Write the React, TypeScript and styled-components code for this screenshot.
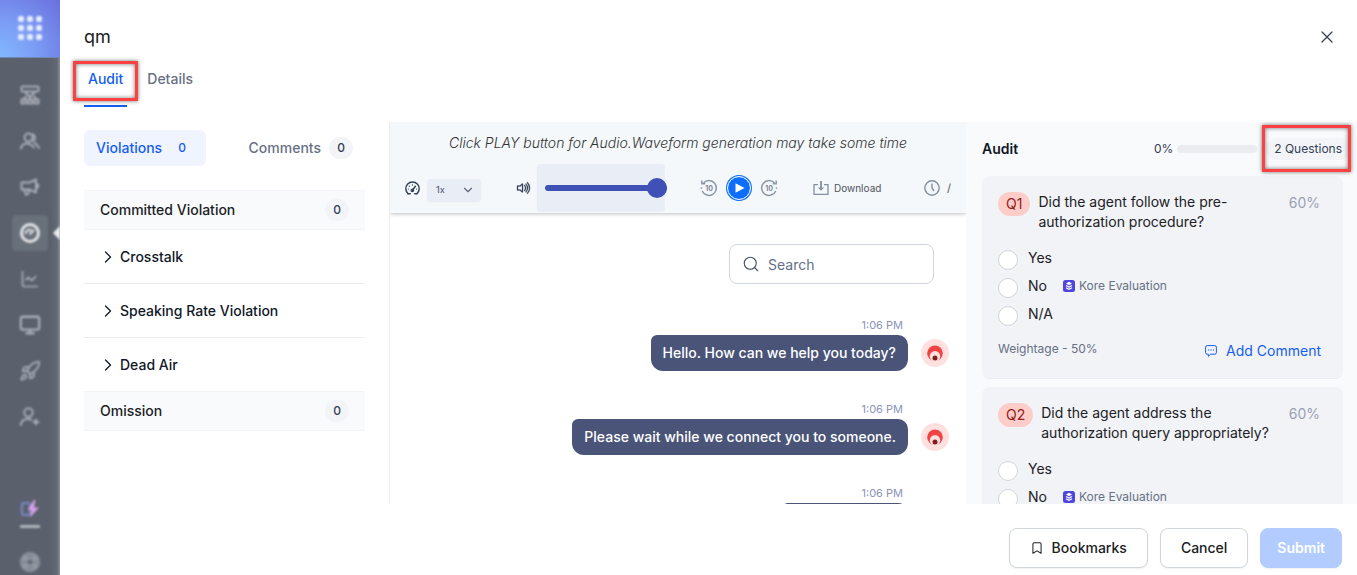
import React from "react";
import styled, { createGlobalStyle, css } from "styled-components";
import {
  Bookmark,
  ChartLine,
  ChevronDown,
  ChevronRight,
  Monitor,
  Rocket,
  Search,
  X,
} from "lucide-react";
import { BsVolumeUp } from "react-icons/bs";

const GlobalStyle = createGlobalStyle`
  *, *::before, *::after { box-sizing: border-box; }
  body {
    margin: 0;
    background: #fff;
    color: #202124;
    font-family: Inter, "Liberation Sans", sans-serif;
    font-size: 14px;
    line-height: 20px;
  }
  button, input, select { font: inherit; color: inherit; }
  h1, h2, h3, p, ul { margin: 0; padding: 0; font: inherit; }
  ul { list-style: none; }
`;

const Shell = styled.div`
  display: flex;
  height: 100vh;
  overflow: hidden;
`;

/* ---------- navigation rail ---------- */

const Rail = styled.nav`
  position: relative;
  flex: none;
  display: flex;
  flex-direction: column;
  width: 60px;
  background: linear-gradient(90deg, #5a606c 0, #5a606c 50px, #626874 57px, #8b909a 60px);
  overflow: hidden;
`;

const AppSwitcher = styled.button`
  display: grid;
  place-items: center;
  height: 58px;
  padding: 0 0 2px;
  border: 0;
  border-bottom: 1px solid #6c86b8;
  color: #e6ecff;
  background: radial-gradient(circle at 0 100%, #82b8ff 0, #7b9bf4 45%, #6a6fdd 100%);
  svg { filter: blur(1px); }
`;

const RailList = styled.ul`
  display: flex;
  flex-direction: column;
  align-items: center;
  gap: 10px;
  padding-top: 19px;
`;

const RailFooter = styled.div`
  display: flex;
  flex-direction: column;
  align-items: center;
  margin-top: auto;
  gap: 7px;
  color: #b0b4bc;
  svg { filter: blur(1px); }
`;

const RailButton = styled.button<{ $active?: boolean; $short?: boolean }>`
  display: grid;
  place-items: center;
  width: 36px;
  height: ${(p) => (p.$short ? 26 : 36)}px;
  padding: 0;
  border: 0;
  border-radius: 4px;
  color: ${(p) => (p.$active ? "#e4e6ea" : "#a9adb7")};
  background: ${(p) => (p.$active ? "#68707a" : "transparent")};
  filter: blur(1px);
`;

const RailDivider = styled.div`
  width: 20px;
  height: 3px;
  margin-bottom: 14px;
  background: #b0b4bc;
  filter: blur(1px);
`;

const RailPointer = styled.span`
  position: absolute;
  right: 0;
  top: 226px;
  border: 7px solid transparent;
  border-left-width: 0;
  border-right-color: #eceef1;
  filter: blur(1px);
`;

/* ---------- page frame ---------- */

const Main = styled.main`
  flex: 1;
  min-width: 0;
  display: flex;
  flex-direction: column;
`;

const Header = styled.header`
  display: flex;
  align-items: center;
  justify-content: space-between;
  padding: 24px 20px 0 24px;
`;

const Title = styled.h1`
  font-size: 18px;
  line-height: 26px;
`;

const IconButton = styled.button`
  display: grid;
  place-items: center;
  padding: 0;
  border: 0;
  background: none;
  color: #344054;
`;

const TabBar = styled.div`
  display: flex;
  gap: 16px;
  padding: 16px 24px 15px;
`;

const Tab = styled.button<{ $active?: boolean }>`
  position: relative;
  height: 41px;
  padding: 0 4px 13px;
  border: 0;
  border-bottom: 2px solid ${(p) => (p.$active ? "#155eef" : "transparent")};
  background: none;
  font-weight: 500;
  color: ${(p) => (p.$active ? "#155eef" : "#667085")};
`;

const Callout = styled.span<{ $inset: string }>`
  position: absolute;
  inset: ${(p) => p.$inset};
  border: 3px solid #fb4141;
  box-shadow: 0 0 4px rgba(0, 0, 0, 0.55), inset 0 0 4px rgba(0, 0, 0, 0.55);
  pointer-events: none;
`;

const Columns = styled.div`
  flex: 1;
  min-height: 0;
  display: grid;
  grid-template-columns: 330px minmax(0, 1fr) 391px;
`;

const Footer = styled.footer`
  display: flex;
  justify-content: flex-end;
  gap: 12px;
  padding: 24px 15px 7px;
`;

const ActionButton = styled.button<{ $primary?: boolean }>`
  display: flex;
  align-items: center;
  gap: 8px;
  height: 40px;
  padding: 0 ${(p) => (p.$primary ? 16 : 20)}px;
  border: 1px solid #d0d5dd;
  border-radius: 8px;
  background: #fff;
  font-weight: 500;
  box-shadow: 0 1px 2px rgba(16, 24, 40, 0.06);
  ${(p) =>
    p.$primary &&
    css`
      border-color: #b2ccff;
      background: #b2ccff;
      color: #fff;
      font-weight: 600;
    `}
`;

/* ---------- violations column ---------- */

const ViolationsPanel = styled.section`
  padding: 8px 24px 0;
  border-right: 1px solid #eaecf0;
  overflow: hidden;
`;

const Switcher = styled.div`
  display: flex;
  justify-content: space-between;
  margin-bottom: 24px;
`;

const SwitchButton = styled.button<{ $active?: boolean }>`
  display: flex;
  align-items: center;
  gap: 8px;
  height: 36px;
  padding: 0 12px;
  border: 0;
  border-radius: 6px;
  background: ${(p) => (p.$active ? "#eff4ff" : "transparent")};
  color: ${(p) => (p.$active ? "#155eef" : "#667085")};
  font-weight: 500;
`;

const Count = styled.span<{ $bare?: boolean }>`
  min-width: 24px;
  padding: 1px 8px;
  border-radius: 11px;
  background: ${(p) => (p.$bare ? "transparent" : "#f2f4f7")};
  color: ${(p) => (p.$bare ? "inherit" : "#344054")};
  font-size: 12px;
  font-weight: 500;
  text-align: center;
`;

const GroupHeader = styled.h2`
  display: flex;
  align-items: center;
  justify-content: space-between;
  height: 40px;
  padding: 0 16px;
  border: solid #f2f4f7;
  border-width: 1px 0;
  background: #f9fafb;
  font-weight: 500;
`;

const ViolationRow = styled.button`
  display: flex;
  align-items: center;
  gap: 2px;
  width: 100%;
  height: 54px;
  padding: 0 14px;
  border: 0;
  border-bottom: 1px solid #eaecf0;
  background: none;
  font-weight: 500;
  color: #101828;
  li:last-child > & { border-bottom: 0; height: 53px; }
`;

/* ---------- conversation column ---------- */

const Conversation = styled.section`
  display: flex;
  flex-direction: column;
  overflow: hidden;
`;

const Player = styled.div`
  flex: none;
  height: 91px;
  padding: 11px 15px 0 15px;
  background: #f4f8fb;
  box-shadow: 0 1px 4px rgba(0, 0, 0, 0.25);
`;

const PlayerHint = styled.p`
  font-size: 14px;
  font-style: italic;
  font-weight: 300;
  text-align: center;
  color: #333;
`;

const Controls = styled.div`
  display: flex;
  align-items: center;
  gap: 35px;
  margin-top: 11px;
  height: 48px;
`;

const ControlGroup = styled.div<{ $gap: number }>`
  display: flex;
  align-items: center;
  gap: ${(p) => p.$gap}px;
`;

const SpeedField = styled.label`
  display: grid;
  grid-template-columns: 1fr auto;
  align-items: center;
  width: 54px;
  height: 22px;
  margin-top: 4px;
  padding-right: 6px;
  border-radius: 4px;
  background: #e9edf6;
  color: #5f6878;
  box-shadow: 0 1px 2px rgba(16, 24, 40, 0.06);
`;

const SpeedSelect = styled.select`
  appearance: none;
  width: 100%;
  padding: 0 0 0 9px;
  border: 0;
  background: none;
  font-size: 9px;
  font-weight: 500;
  line-height: 20px;
`;

const VolumeBox = styled.div`
  width: 128px;
  height: 48px;
  display: flex;
  align-items: center;
  padding-left: 8px;
  border-radius: 4px;
  background: #e9edf6;
`;

const VolumeSlider = styled.input`
  flex: none;
  appearance: none;
  width: 122px;
  height: 20px;
  margin: 0;
  background: none;
  &::-webkit-slider-runnable-track {
    height: 6px;
    border-radius: 3px;
    background: #3f51b5;
  }
  &::-webkit-slider-thumb {
    appearance: none;
    width: 20px;
    height: 20px;
    margin-top: -7px;
    border-radius: 50%;
    background: #3f51b5;
  }
`;

const PlayButton = styled.button`
  display: grid;
  place-items: center;
  width: 24px;
  height: 24px;
  padding: 0;
  border: 1px solid #fff;
  border-radius: 50%;
  background: #0d6efd;
  background-clip: padding-box;
  box-shadow: 0 0 0 1px #0d6efd;
`;

const DownloadButton = styled.button`
  display: flex;
  align-items: center;
  gap: 5px;
  padding: 0;
  border: 0;
  background: none;
  font-size: 10px;
  color: #4f545c;
`;

const Clock = styled.span`
  display: flex;
  align-items: center;
  gap: 7px;
  margin-left: auto;
  font-size: 11px;
  color: #4f545c;
`;

const Thread = styled.div`
  flex: 1;
  min-height: 0;
  display: flex;
  flex-direction: column;
  align-items: flex-end;
  padding: 31px 17px 0;
  overflow: hidden;
`;

const SearchField = styled.label`
  flex: none;
  display: flex;
  align-items: center;
  gap: 8px;
  width: 205px;
  height: 40px;
  margin: 0 15px 33px;
  padding: 0 12px;
  border: 1px solid #d0d5dd;
  border-radius: 8px;
  color: #475467;
  svg { flex: none; }
`;

const SearchInput = styled.input`
  width: 100%;
  min-width: 0;
  padding: 2px 0 0;
  border: 0;
  outline: 0;
  background: none;
  &::placeholder { color: #667085; opacity: 1; }
`;

const Message = styled.article`
  flex: none;
  display: grid;
  grid-template-columns: auto 28px;
  column-gap: 13px;
  row-gap: 2px;
  align-items: center;
  justify-items: end;
  margin-bottom: 30px;
`;

const Time = styled.time`
  grid-column: 1;
  padding-right: 5px;
  font-size: 11px;
  line-height: 16px;
  color: #8a94b8;
`;

const Bubble = styled.p`
  grid-column: 1;
  min-width: 126px;
  height: 36px;
  padding: 8px 12px;
  border-radius: 6px 10px 12px 12px;
  background: #4a5478;
  color: #fff;
  font-weight: 500;
`;

/* ---------- audit column ---------- */

const AuditPanel = styled.section`
  display: flex;
  flex-direction: column;
  gap: 8px;
  padding: 16px 14px 0 16px;
  background: #f9fafc;
  overflow: hidden;
`;

const AuditHeader = styled.div`
  flex: none;
  display: flex;
  align-items: center;
  height: 22px;
  margin-bottom: 8px;
  font-size: 12px;
  color: #344054;
`;

const AuditTitle = styled.h2`
  flex: 1;
  font-size: 14px;
  font-weight: 600;
  color: #101828;
`;

const Progress = styled.div`
  width: 80px;
  height: 8px;
  margin: 0 9px 0 4px;
  border-radius: 4px;
  background: #eaecf0;
`;

const QuestionCount = styled.span`
  position: relative;
  margin-right: -7px;
  padding: 1px 8px;
  border-radius: 11px;
  background: #f2f4f7;
`;

const Card = styled.article`
  flex: none;
  padding: 16px 16px 17px;
  border-radius: 8px;
  background: #f2f3f7;
  border-bottom: 1px solid #ebecf1;
`;

const CardHeader = styled.div`
  display: flex;
  align-items: flex-start;
  gap: 8px;
  margin-bottom: 18px;
`;

const QuestionTag = styled.span`
  padding: 2px 8px;
  border-radius: 12px;
  background: #fecdca;
  color: #912018;
`;

const QuestionText = styled.h3`
  flex: 0 1 240px;
`;

const Score = styled.span`
  margin-left: auto;
  padding: 1px 7px 0 0;
  color: #98a2b3;
`;

const Options = styled.fieldset`
  display: flex;
  flex-direction: column;
  gap: 8px;
  margin: 0;
  padding: 0;
  border: 0;
`;

const Option = styled.div`
  display: flex;
  align-items: center;
  height: 20px;
`;

const OptionLabel = styled.label`
  display: flex;
  gap: 10px;
  line-height: 16px;
`;

const Radio = styled.input`
  appearance: none;
  width: 20px;
  height: 20px;
  margin: 0;
  border: 1px solid #d0d5dd;
  border-radius: 50%;
  background: #fff;
`;

const Source = styled.span`
  display: flex;
  align-items: center;
  gap: 4px;
  margin: -4px 0 0 16px;
  font-size: 12px;
  color: #667085;
`;

const CardFooter = styled.div`
  display: flex;
  justify-content: space-between;
  margin-top: 13px;
  padding-right: 6px;
`;

const Weightage = styled.span`
  font-size: 12px;
  color: #667085;
`;

const CommentButton = styled.button`
  display: flex;
  align-items: center;
  gap: 9px;
  margin-top: 2px;
  padding: 0;
  border: 0;
  background: none;
  color: #155eef;
`;

/* ---------- drawings ---------- */

const DotsIcon = () => (
  <svg width="24" height="24" viewBox="0 0 24 24" fill="currentColor">
    {[0, 9, 18].map((y) => [0, 9, 18].map((x) => <rect key={`${x}-${y}`} x={x} y={y} width="6" height="6" rx="2" />))}
  </svg>
);

const FlowIcon = () => (
  <svg width="20" height="20" viewBox="0 0 20 20" fill="none" stroke="currentColor" strokeWidth="2">
    <rect x="1.500" y="1.500" width="17" height="5" rx="1" />
    <path d="M5 7l5 5 5-5M3.500 14l3-3M16.500 14l-3-3M10 12v2" />
    <rect x="1.500" y="14.500" width="4" height="4" />
    <rect x="8" y="14.500" width="4" height="4" />
    <rect x="14.500" y="14.500" width="4" height="4" />
  </svg>
);

const AgentsIcon = () => (
  <svg width="20" height="20" viewBox="0 0 20 20" fill="none" stroke="currentColor" strokeWidth="2" strokeLinecap="round">
    <circle cx="8.500" cy="6.500" r="4" />
    <path d="M12.500 3.500a3.500 3.500 0 0 1 .5 6.500M1 17.500c.5-3 2.500-5 6-5s5 1.500 7 4M14.500 12c2 .8 3.500 2.500 4.500 5" />
  </svg>
);

const CampaignIcon = () => (
  <svg width="20" height="20" viewBox="0 0 20 20" fill="none" stroke="currentColor" strokeWidth="2" strokeLinejoin="round">
    <path d="M1.500 5.500h8L16 2.500v13l-6.500-3h-8ZM4 12.500l2 5.500 3-2-1-3.500M16 7c3 0 3 4 0 4" />
  </svg>
);

const InviteIcon = () => (
  <svg width="20" height="20" viewBox="0 0 20 20" fill="none" stroke="currentColor" strokeWidth="2" strokeLinecap="round">
    <circle cx="8.500" cy="5.500" r="4.200" />
    <path d="M1 18c0-4 3-6 7-6 1.500 0 2.500.2 3.500.8M16 12.500v5M13.500 15h5" />
  </svg>
);

const LanguageIcon = () => (
  <svg width="20" height="20" viewBox="0 0 20 20" fill="none" stroke="currentColor">
    <circle cx="10" cy="10" r="8.300" strokeWidth="2.500" />
    <rect x="6" y="6" width="8" height="8" rx="1.500" strokeWidth="2" />
    <path d="M2 7h16M2 13h16" strokeWidth="1.200" />
  </svg>
);

const DialIcon = () => (
  <svg width="22" height="22" viewBox="0 0 22 22" fill="none" stroke="currentColor">
    <circle cx="11" cy="11" r="8.500" strokeWidth="3" />
    <path d="M6.500 12a4.500 4.500 0 0 1 6-4M10.500 12.500 15 8" strokeWidth="2" />
  </svg>
);

const SparkIcon = () => (
  <svg width="20" height="18" viewBox="0 0 20 18">
    <rect x="2" y="3" width="8" height="12" rx="2" fill="none" stroke="#7584b8" strokeWidth="2.500" />
    <path d="M14 0 7.500 10h4L10 17.500 19 7.500h-5L15.500 0Z" fill="#dba0ea" />
  </svg>
);

const GaugeIcon = () => (
  <svg width="15" height="15" viewBox="0 0 15 15" fill="none" stroke="#344054" strokeLinecap="round">
    <path d="M3 12.600A6.700 6.700 0 1 1 12 12.600" strokeWidth="1.400" />
    <path d="M3 12.800h2.200M9.800 12.800H12M7.300 9.600l3-4.300" strokeWidth="1.500" />
    <circle cx="7.300" cy="9.300" r="1.300" strokeWidth="1.100" />
    <path d="M3.300 8h.1M4.300 5.200h.1M7.400 3.900h.1M11.500 8h.1" strokeWidth="1.200" />
  </svg>
);

const SkipIcon = ({ forward }: { forward?: boolean }) => (
  <svg width="18" height="18" viewBox="0 0 18 18" fill="none" stroke="#8d98a5" strokeWidth="1.500">
    <g transform={forward ? "matrix(-1 0 0 1 18 0)" : undefined}>
      <path d="M3.500 4A7.400 7.400 0 1 1 2.200 12M1.500 9.800V8.300" />
      <path d="M1.800 1.500V4.800H5.200" />
    </g>
    <text x="9" y="11.500" textAnchor="middle" fontSize="7" fontWeight="700" fill="#7d8896" stroke="none">
      10
    </text>
  </svg>
);

const PlayIcon = () => (
  <svg width="22" height="22" viewBox="0 0 22 22">
    <path d="M7.500 6.200v9.600l9-4.800Z" fill="#fff" />
  </svg>
);

const DownloadIcon = () => (
  <svg width="16" height="16" viewBox="0 0 16 16" fill="none" stroke="#8490a0" strokeWidth="1.300">
    <path d="M5 4.600H1V14.400H15V4.600H11" />
    <path d="M8 1V10" strokeWidth="1.800" />
    <path d="M5 7.400h6L8 10.800Z" fill="#8490a0" stroke="none" />
  </svg>
);

const ClockIcon = () => (
  <svg width="16" height="16" viewBox="0 0 16 16" fill="none" stroke="#8490a0" strokeWidth="1.400">
    <circle cx="8" cy="8" r="7.200" />
    <path d="M8 3.500V8l2 3" />
  </svg>
);

const AgentAvatar = () => (
  <svg width="28" height="28" viewBox="0 0 28 28" role="img" aria-label="Agent">
    <circle cx="14" cy="14" r="14" fill="#fee0df" />
    <circle cx="14" cy="14.200" r="7.800" fill="#f04444" />
    <circle cx="14" cy="17.300" r="5.200" fill="#fee0df" />
    <circle cx="14" cy="19" r="2.500" fill="#7f1d1d" />
  </svg>
);

const StackIcon = () => (
  <svg width="12" height="12" viewBox="0 0 12 12">
    <rect width="12" height="12" rx="2.500" fill="#4f46e0" />
    <path d="M6 1.800 9 3.500 6 5.200 3 3.500Z" fill="#fff" />
    <path d="M3 5.500 6 7.100l3-1.600M3 7.800l3 1.600 3-1.600" fill="none" stroke="#fff" strokeWidth="1.200" />
  </svg>
);

const CommentIcon = () => (
  <svg width="12" height="12" viewBox="0 0 12 12" fill="none" stroke="currentColor">
    <path d="M2.200.6H9.800A1.600 1.600 0 0 1 11.400 2.200V7.600A1.600 1.600 0 0 1 9.800 9.200H5.600L3.300 11.300V9.200H2.200A1.600 1.600 0 0 1 .6 7.600V2.200A1.600 1.600 0 0 1 2.200.6Z" />
    <path d="M3 5h1.200M5.400 5h1.200M7.800 5H9" strokeWidth="1.200" />
  </svg>
);

/* ---------- content ---------- */

const railItems = [
  { name: "Flows", icon: <FlowIcon /> },
  { name: "Agents", icon: <AgentsIcon /> },
  { name: "Campaigns", icon: <CampaignIcon /> },
  { name: "Quality", icon: <DialIcon />, active: true },
  { name: "Analytics", icon: <ChartLine size={20} /> },
  { name: "Console", icon: <Monitor size={22} strokeWidth={2.5} /> },
  { name: "Deploy", icon: <Rocket size={22} /> },
  { name: "Invite", icon: <InviteIcon /> },
];

const violations = ["Crosstalk", "Speaking Rate Violation", "Dead Air"];

const messages = [
  { time: "1:06 PM", text: "Hello. How can we help you today?" },
  { time: "1:06 PM", text: "Please wait while we connect you to someone." },
  { time: "1:06 PM", text: "" },
];

const questions = [
  { id: "Q1", text: "Did the agent follow the pre-authorization procedure?", score: "60%" },
  { id: "Q2", text: "Did the agent address the authorization query appropriately?", score: "60%" },
];

const answers = ["Yes", "No", "N/A"];

function QuestionCard({ id, text, score }: { id: string; text: string; score: string }) {
  return (
    <Card>
      <CardHeader>
        <QuestionTag>{id}</QuestionTag>
        <QuestionText>{text}</QuestionText>
        <Score>{score}</Score>
      </CardHeader>
      <Options aria-label={text}>
        {answers.map((answer) => (
          <Option key={answer}>
            <OptionLabel>
              <Radio type="radio" name={id} />
              {answer}
            </OptionLabel>
            {answer === "No" && (
              <Source>
                <StackIcon />
                Kore Evaluation
              </Source>
            )}
          </Option>
        ))}
      </Options>
      <CardFooter>
        <Weightage>Weightage - 50%</Weightage>
        <CommentButton type="button">
          <CommentIcon />
          Add Comment
        </CommentButton>
      </CardFooter>
    </Card>
  );
}

export default function App() {
  return (
    <Shell>
      <GlobalStyle />
      <Rail aria-label="Main">
        <AppSwitcher aria-label="Apps">
          <DotsIcon />
        </AppSwitcher>
        <RailList>
          {railItems.map((item) => (
            <li key={item.name}>
              <RailButton aria-label={item.name} $active={item.active}>
                {item.icon}
              </RailButton>
            </li>
          ))}
        </RailList>
        <RailPointer />
        <RailFooter>
          <SparkIcon />
          <RailDivider />
          <RailButton aria-label="Language" $short>
            <LanguageIcon />
          </RailButton>
        </RailFooter>
      </Rail>

      <Main>
        <Header>
          <Title>qm</Title>
          <IconButton aria-label="Close">
            <X size={20} strokeWidth={1.5} />
          </IconButton>
        </Header>
        <TabBar>
          <Tab $active>
            Audit
            <Callout $inset="-5px -11px 4px -11px" />
          </Tab>
          <Tab>Details</Tab>
        </TabBar>

        <Columns>
          <ViolationsPanel>
            <Switcher>
              <SwitchButton $active>
                Violations <Count $bare>0</Count>
              </SwitchButton>
              <SwitchButton>
                Comments <Count>0</Count>
              </SwitchButton>
            </Switcher>
            <GroupHeader>
              Committed Violation <Count>0</Count>
            </GroupHeader>
            <ul>
              {violations.map((name) => (
                <li key={name}>
                  <ViolationRow>
                    <ChevronRight size={20} strokeWidth={1.5} />
                    {name}
                  </ViolationRow>
                </li>
              ))}
            </ul>
            <GroupHeader>
              Omission <Count>0</Count>
            </GroupHeader>
          </ViolationsPanel>

          <Conversation>
            <Player>
              <PlayerHint>Click PLAY button for Audio.Waveform generation may take some time</PlayerHint>
              <Controls>
                <ControlGroup $gap={7}>
                  <GaugeIcon />
                  <SpeedField>
                    <SpeedSelect aria-label="Playback speed">
                      <option>1x</option>
                    </SpeedSelect>
                    <ChevronDown size={14} strokeWidth={2} />
                  </SpeedField>
                </ControlGroup>
                <ControlGroup $gap={5}>
                  <BsVolumeUp size={16} color="#344054" stroke="#344054" strokeWidth={0.3} />
                  <VolumeBox>
                    <VolumeSlider type="range" aria-label="Volume" defaultValue={100} />
                  </VolumeBox>
                </ControlGroup>
                <ControlGroup $gap={9}>
                  <IconButton aria-label="Back 10 seconds">
                    <SkipIcon />
                  </IconButton>
                  <PlayButton aria-label="Play">
                    <PlayIcon />
                  </PlayButton>
                  <IconButton aria-label="Forward 10 seconds">
                    <SkipIcon forward />
                  </IconButton>
                </ControlGroup>
                <DownloadButton>
                  <DownloadIcon />
                  Download
                </DownloadButton>
                <Clock>
                  <ClockIcon />/
                </Clock>
              </Controls>
            </Player>
            <Thread>
              <SearchField>
                <Search size={18} strokeWidth={1.5} />
                <SearchInput type="text" placeholder="Search" aria-label="Search" />
              </SearchField>
              {messages.map((message, index) => (
                <Message key={index}>
                  <Time>{message.time}</Time>
                  <Bubble>{message.text}</Bubble>
                  <AgentAvatar />
                </Message>
              ))}
            </Thread>
          </Conversation>

          <AuditPanel>
            <AuditHeader>
              <AuditTitle>Audit</AuditTitle>
              0%
              <Progress role="progressbar" aria-label="Audit progress" aria-valuenow={0} />
              <QuestionCount>
                2 Questions
                <Callout $inset="-13px -1px -12px -4px" />
              </QuestionCount>
            </AuditHeader>
            {questions.map((question) => (
              <QuestionCard key={question.id} {...question} />
            ))}
          </AuditPanel>
        </Columns>

        <Footer>
          <ActionButton>
            <Bookmark size={14} strokeWidth={1.75} />
            Bookmarks
          </ActionButton>
          <ActionButton>Cancel</ActionButton>
          <ActionButton $primary>Submit</ActionButton>
        </Footer>
      </Main>
    </Shell>
  );
}
